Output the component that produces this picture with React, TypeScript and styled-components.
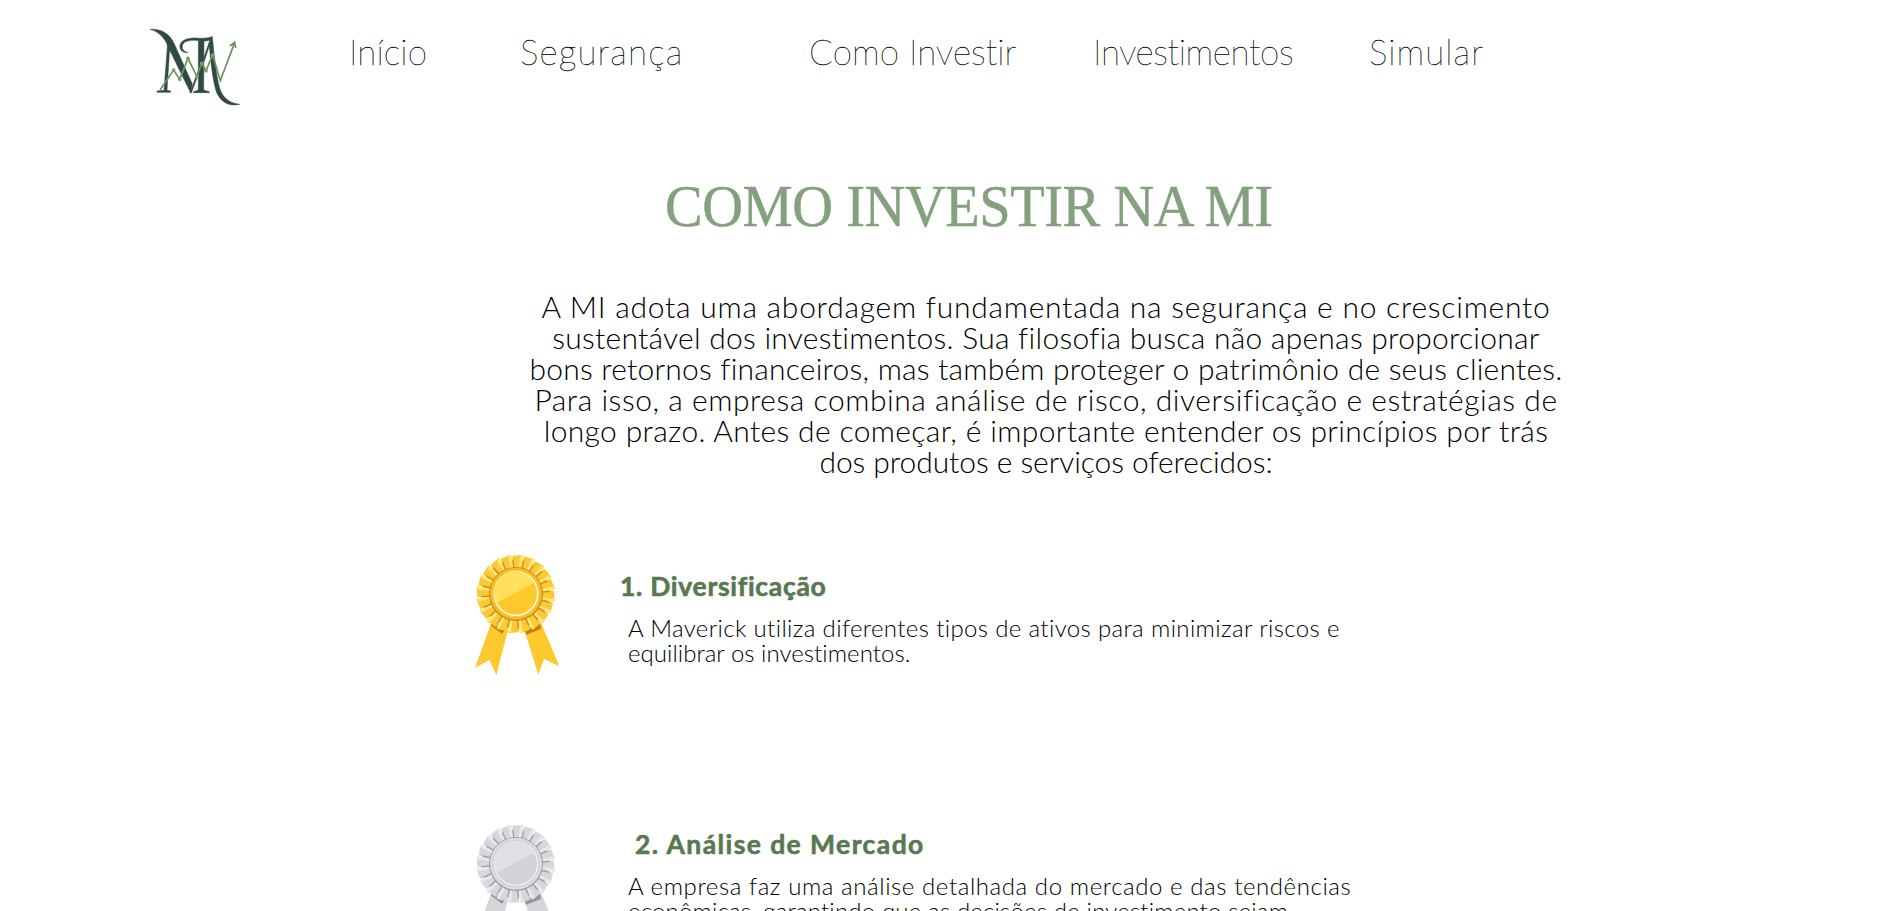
import React from 'react';
import styled, { createGlobalStyle } from 'styled-components';

const GlobalStyle = createGlobalStyle`
  * { box-sizing: border-box; }
  body { margin: 0; background: #fff; }
`;

const Page = styled.div`
  height: 911px;
  overflow: hidden;
  background: #fff;
  color: #000;
  font-family: Lato, "Liberation Sans", sans-serif;
  font-weight: 300;
`;

const Header = styled.header`
  display: grid;
  grid-template-columns: 219px 171px 289px 284px 276px auto;
  align-items: start;
  height: 172px;
  padding: 10px 0 0 130px;
`;

const NavLink = styled.a<{ $tracking: number }>`
  margin-top: 20px;
  font-size: 35px;
  font-weight: 100;
  line-height: 42px;
  letter-spacing: ${p => p.$tracking}px;
  white-space: nowrap;
  color: #000;
  -webkit-text-stroke: 0.3px #000;
`;

const Title = styled.h1`
  margin: 0 0 0 665px;
  width: 700px;
  height: 119px;
  font: 400 60px/68px "Liberation Serif", serif;
  letter-spacing: -0.45px;
  white-space: nowrap;
  color: #84a07f;
  -webkit-text-stroke: 0.5px #84a07f;
  transform: scaleX(0.94);
  transform-origin: left top;
`;

const Intro = styled.p`
  margin: 0 0 0 516px;
  width: 1060px;
  height: 249px;
  font-size: 30px;
  line-height: 31px;
  text-align: center;
`;

const Line = styled.span<{ $tracking: number }>`
  display: block;
  letter-spacing: ${p => p.$tracking}px;
  white-space: nowrap;
`;

const Principle = styled.section`
  display: grid;
  grid-template-columns: 120px 1fr;
  column-gap: 40px;
  height: 270px;
  padding-left: 460px;
`;

const Copy = styled.div<{ $top: number }>`
  padding-top: ${p => p.$top}px;
`;

const Subtitle = styled.h2<{ $indent: number; $tracking: number }>`
  margin: 0 0 13px;
  padding-left: ${p => p.$indent}px;
  font-size: 26.5px;
  font-weight: 700;
  line-height: 31px;
  letter-spacing: ${p => p.$tracking}px;
  color: #597852;
  -webkit-text-stroke: 0.6px #597852;
`;

const Description = styled.p`
  margin: 0;
  padding-left: 8px;
  font-size: 24px;
  line-height: 25px;
`;

const LogoMark = styled.svg`
  display: block;
  width: 130px;
  height: 110px;
`;

const MedalImage = styled.svg`
  display: block;
  width: 120px;
  height: 145px;
`;

function Logo() {
  return (
    <LogoMark viewBox="0 0 390 330" role="img" aria-label="MI">
      <g fill="#2f4a43" stroke="#2f4a43" strokeWidth="1.5">
        <path d="M60 58 C92 55 119 70 133 102 L187 222 L182 249 L113 108 C104 82 85 65 60 58Z" />
        <path d="M113 98 L120 102 L111 241 L122 243 L122 247 L81 247 L81 243 L102 241Z" />
        <path d="M180 248 L206 178 L206 190 L184 249Z" />
        <path d="M205 92 L222 90 L221 240 L238 245 L238 248 L190 248 L190 245 L205 240Z" />
        <path d="M174 128 C157 130 148 119 150 106 C153 89 175 83 199 84 C218 86 231 84 246 80 L241 89 C224 97 207 91 190 91 C169 91 158 98 157 109 C156 119 163 125 174 128Z" />
        <path d="M222 142 L241 86 L247 80 C252 135 257 178 265 218 C272 257 291 278 329 283 C292 292 266 270 257 239 C247 202 242 153 238 108 L223 153Z" />
      </g>
      <g fill="none" stroke="#6f9064" strokeWidth="5">
        <path d="M90 240 L131 180 L149 208 L174 145 L201 200 L215 160 L228 182 L248 135 L271 212 L313 100" />
        <path d="M300 108 L314 97 L317 114" />
      </g>
      <g fill="#7c9c70">
        {[[131, 180], [149, 208], [174, 145], [201, 200], [215, 160], [228, 182], [248, 135]].map(([x, y]) => (
          <circle key={x} cx={x} cy={y} r="5.5" />
        ))}
      </g>
    </LogoMark>
  );
}

type Palette = { ribbon: string; pleat: string; light: string; dark: string; rim: string; face: string; shine: string; ring: string };

const gold: Palette = { ribbon: '#fdc92c', pleat: '#fcc833', light: '#fee873', dark: '#c87d14', rim: '#f3b72a', face: '#fdc92c', shine: '#fee05c', ring: '#fffbe6' };
const silver: Palette = { ribbon: '#d5d6da', pleat: '#d6d7db', light: '#e8e9ec', dark: '#93949d', rim: '#dcdde0', face: '#d2d3d7', shine: '#dfe0e3', ring: '#ecedef' };

function Medal({ colors }: { colors: Palette }) {
  const pleats = Array.from({ length: 20 }, (_, i) => i * 18);
  return (
    <MedalImage viewBox="0 0 360 435" aria-hidden="true">
      <path fill={colors.ribbon} d="M95 245 L45 384 L88 360 L109 405 L144 270Z M193 270 L235 404 L252 357 L298 379 L242 245Z" />
      <path fill={colors.dark} d="M92 256 L126 281 L139 265 L100 243Z M193 268 L198 284 L243 267 L240 250Z" />
      <circle cx="167" cy="162" r="101" fill={colors.dark} />
      {pleats.map(angle => (
        <g key={angle} transform={`rotate(${angle + 3} 167 162)`}>
          <path fill={colors.pleat} d="M156 86 L151 48 L183 44 L179 86Z" />
          <path fill={colors.light} d="M172 87 L175 45 L185 49 L179 87Z" />
          <path fill={colors.dark} d="M156 86 L152 60 L155 56 L160 86Z" opacity="0.7" />
        </g>
      ))}
      <circle cx="168" cy="162" r="81" fill={colors.dark} opacity="0.85" />
      <circle cx="168" cy="161" r="78" fill={colors.rim} />
      <circle cx="168" cy="161" r="72" fill={colors.face} />
      <circle cx="168" cy="161" r="65" fill={colors.face} stroke={colors.ring} strokeWidth="4.5" />
      <path fill={colors.shine} d="M110 188 A63 63 0 0 1 222 129Z" />
    </MedalImage>
  );
}

const links = [
  { label: 'Início', tracking: 0.1 },
  { label: 'Segurança', tracking: 1.16 },
  { label: 'Como Investir', tracking: 0.05 },
  { label: 'Investimentos', tracking: -0.38 },
  { label: 'Simular', tracking: 1.05 },
];

const intro = [
  { text: 'A MI adota uma abordagem fundamentada na segurança e no crescimento', tracking: 0.75 },
  { text: 'sustentável dos investimentos. Sua filosofia busca não apenas proporcionar', tracking: 0.26 },
  { text: 'bons retornos financeiros, mas também proteger o patrimônio de seus clientes.', tracking: 0.218 },
  { text: 'Para isso, a empresa combina análise de risco, diversificação e estratégias de', tracking: 0.541 },
  { text: 'longo prazo. Antes de começar, é importante entender os princípios por trás', tracking: 0.35 },
  { text: 'dos produtos e serviços oferecidos:', tracking: -0.062 },
];

const principles = [
  {
    title: '1. Diversificação', colors: gold, top: 31, indent: -1, tracking: 0.7,
    lines: [
      { text: 'A Maverick utiliza diferentes tipos de ativos para minimizar riscos e', tracking: 0.36 },
      { text: 'equilibrar os investimentos.', tracking: 0.04 },
    ],
  },
  {
    title: '2. Análise de Mercado', colors: silver, top: 19, indent: 15, tracking: 1.42,
    lines: [
      { text: 'A empresa faz uma análise detalhada do mercado e das tendências', tracking: 0.58 },
      { text: 'econômicas, garantindo que as decisões de investimento sejam', tracking: 0.18 },
    ],
  },
];

export default function App() {
  return (
    <Page>
      <GlobalStyle />
      <Header>
        <Logo />
        {links.map(link => <NavLink key={link.label} $tracking={link.tracking}>{link.label}</NavLink>)}
      </Header>
      <main>
        <Title>COMO INVESTIR NA MI</Title>
        <Intro>
          {intro.map(line => <Line key={line.text} $tracking={line.tracking}>{line.text}</Line>)}
        </Intro>
        {principles.map(item => (
          <Principle key={item.title}>
            <Medal colors={item.colors} />
            <Copy $top={item.top}>
              <Subtitle $indent={Math.max(item.indent, 0)} $tracking={item.tracking}>{item.title}</Subtitle>
              <Description>
                {item.lines.map(line => <Line key={line.text} $tracking={line.tracking}>{line.text}</Line>)}
              </Description>
            </Copy>
          </Principle>
        ))}
      </main>
    </Page>
  );
}
